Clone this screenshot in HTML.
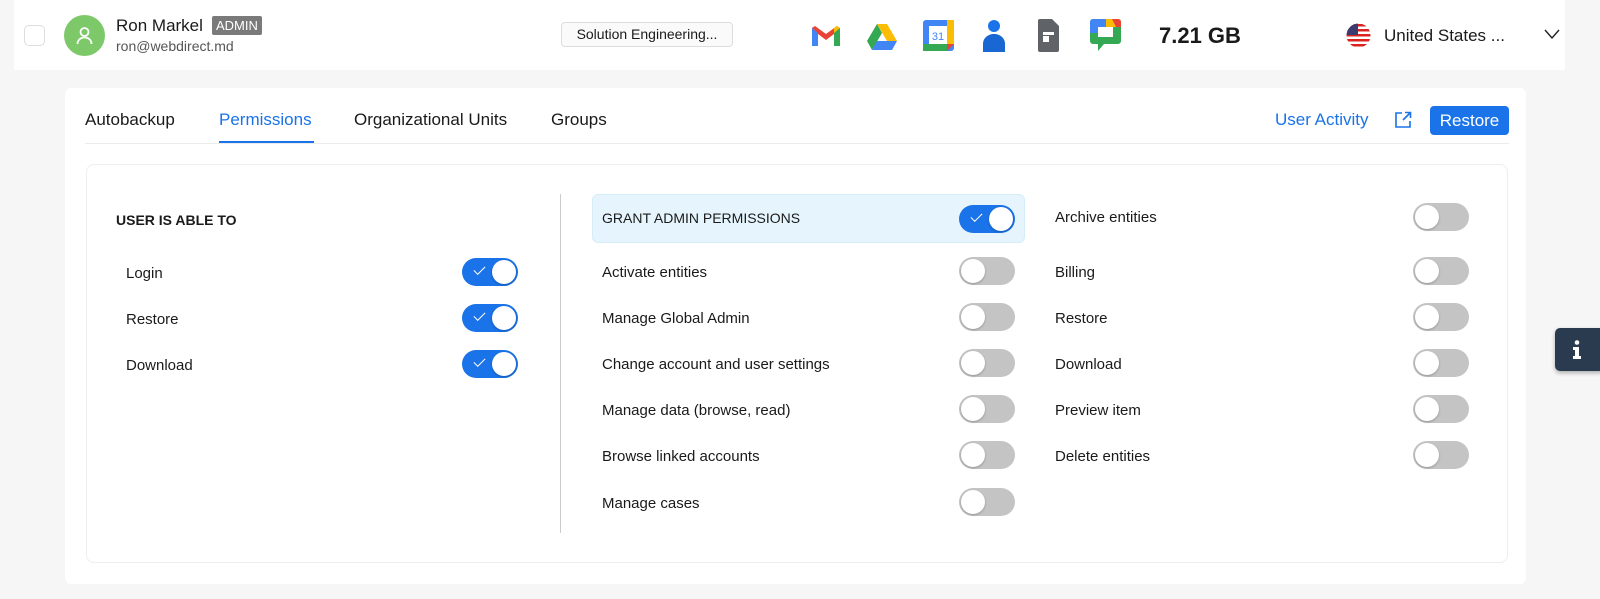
<!DOCTYPE html>
<html><head><meta charset="utf-8"><style>
*{box-sizing:border-box;margin:0;padding:0}
body{width:1600px;height:599px;background:#f6f6f6;font-family:"Liberation Sans",Arial,sans-serif;position:relative;overflow:hidden;color:#1a1a1a}
.a{position:absolute}
.top{left:14px;top:0;width:1551px;height:70px;background:#fff}
.tg{position:absolute;width:56px;height:28px;border-radius:14px;background:#c4c4c4}
.tg::after{content:"";position:absolute;left:2px;top:2px;width:24px;height:24px;border-radius:50%;background:#fff;box-shadow:0 1px 2px rgba(0,0,0,.25)}
.tg.on{background:#1a73e8}
.tg.on::after{left:30px}
.tg.on::before{content:"";position:absolute;left:12px;top:8px;width:10px;height:5px;border-left:1.5px solid #fff;border-bottom:1.5px solid #fff;transform:rotate(-45deg)}
.lb{position:absolute;font-size:15px;color:#1a1a1a}
.tab{position:absolute;top:110px;font-size:17px;color:#1a1a1a}
</style></head><body>
<div class="a top"></div>
<div class="a" style="left:24px;top:25px;width:21px;height:21px;border:1px solid #ddd;border-radius:5px;background:#fff"></div>
<div class="a" style="left:64px;top:15px;width:41px;height:41px;border-radius:50%;background:#7dc96a"></div>
<svg class="a" style="left:74px;top:25px" width="21" height="21" viewBox="0 0 21 21" fill="none" stroke="#fff" stroke-width="1.8"><circle cx="10.5" cy="7" r="4"/><path d="M3.5 19c0-4 3-6.5 7-6.5s7 2.5 7 6.5"/></svg>
<div class="a" style="left:116px;top:16px;font-size:17px">Ron Markel</div>
<div class="a" style="left:212px;top:16px;background:#7a7a7a;color:#fff;font-size:13px;padding:2px 4px;border-radius:2px">ADMIN</div>
<div class="a" style="left:116px;top:38px;font-size:14px;color:#555">ron@webdirect.md</div>
<div class="a" style="left:561px;top:22px;width:172px;height:25px;border:1px solid #ddd;border-radius:4px;background:#fafafa;font-size:14px;line-height:23px;text-align:center">Solution Engineering...</div>
<!-- gmail -->
<svg class="a" style="left:810px;top:24px" width="32" height="24" viewBox="0 0 32 24"><path d="M2 4v18h6V10l8 6 8-6v12h6V4l-3-2-11 8L5 2z" fill="#ea4335"/><path d="M2 4v18h6V9z" fill="#4285f4"/><path d="M24 9v13h6V4z" fill="#34a853"/><path d="M24 9l6-5-3-2-3 2z" fill="#fbbc04"/></svg>
<!-- drive -->
<svg class="a" style="left:866px;top:23px" width="32" height="28" viewBox="0 0 32 28"><path d="M11 1h10l10 17h-10z" fill="#fbbc04"/><path d="M11 1L1 18l5 9 10-17z" fill="#34a853"/><path d="M6 27h20l5-9H11z" fill="#4285f4"/></svg>
<!-- calendar -->
<svg class="a" style="left:923px;top:20px" width="31" height="31" viewBox="0 0 31 31"><rect x="0" y="0" width="31" height="31" rx="3" fill="#4285f4"/><rect x="0" y="24" width="24" height="7" fill="#34a853"/><rect x="24" y="0" width="7" height="24" fill="#fbbc04"/><path d="M24 24h7l-7 7z" fill="#ea4335"/><rect x="6" y="6" width="18" height="18" fill="#fff"/><text x="15" y="20" font-size="11" text-anchor="middle" fill="#4285f4" font-family="Liberation Sans">31</text></svg>
<!-- contacts -->
<svg class="a" style="left:982px;top:19px" width="24" height="33" viewBox="0 0 24 33"><circle cx="12" cy="7" r="6" fill="#1a73e8"/><path d="M1 33v-8c0-6 5-10 11-10s11 4 11 10v8z" fill="#1967d2"/></svg>
<!-- sites -->
<svg class="a" style="left:1038px;top:19px" width="21" height="33" viewBox="0 0 21 33"><path d="M2 0h12l7 7v24a2 2 0 0 1-2 2H2a2 2 0 0 1-2-2V2a2 2 0 0 1 2-2z" fill="#5f6368"/><rect x="5" y="13" width="11" height="3" fill="#fff"/><rect x="5" y="17" width="6" height="6" fill="#fff"/></svg>
<!-- chat -->
<svg class="a" style="left:1090px;top:19px" width="31" height="33" viewBox="0 0 31 33"><path d="M3 0h25a3 3 0 0 1 3 3v19a3 3 0 0 1-3 3H14l-6 7v-7H3a3 3 0 0 1-3-3V3a3 3 0 0 1 3-3z" fill="#34a853"/><path d="M0 3a3 3 0 0 1 3-3h13v8H8v6H0z" fill="#4285f4"/><path d="M16 0h12a3 3 0 0 1 3 3v5H16z" fill="#fbbc04"/><path d="M22 0h6a3 3 0 0 1 3 3v5h-5z" fill="#ea4335"/><rect x="8" y="8" width="15" height="10" fill="#fff"/></svg>
<div class="a" style="left:1159px;top:23px;font-size:22px;font-weight:bold">7.21 GB</div>
<svg class="a" style="left:1346px;top:23px" width="25" height="25" viewBox="0 0 25 25"><defs><clipPath id="c"><circle cx="12.5" cy="12.5" r="12"/></clipPath></defs><g clip-path="url(#c)"><rect width="25" height="25" fill="#fff"/><g fill="#d22"><rect y="1" width="25" height="2.5"/><rect y="6" width="25" height="2.5"/><rect y="11" width="25" height="2.5"/><rect y="16" width="25" height="2.5"/><rect y="21" width="25" height="2.5"/></g><rect width="12" height="12" fill="#3c3b6e"/></g></svg>
<div class="a" style="left:1384px;top:26px;font-size:17px">United States ...</div>
<svg class="a" style="left:1544px;top:29px" width="16" height="10" viewBox="0 0 16 10"><path d="M1 1l7 8 7-8" fill="none" stroke="#222" stroke-width="1.4"/></svg>

<div class="a" style="left:65px;top:88px;width:1461px;height:496px;background:#fff;border-radius:6px"></div>
<div class="tab" style="left:85px">Autobackup</div>
<div class="tab" style="left:219px;color:#1a73e8">Permissions</div>
<div class="tab" style="left:354px">Organizational Units</div>
<div class="tab" style="left:551px">Groups</div>
<div class="a" style="left:85px;top:143px;width:1424px;height:1px;background:#ececec"></div>
<div class="a" style="left:219px;top:141px;width:95px;height:2px;background:#1a73e8"></div>
<div class="a" style="left:1275px;top:110px;font-size:17px;color:#1a73e8">User Activity</div>
<svg class="a" style="left:1394px;top:111px" width="18" height="18" viewBox="0 0 18 18" fill="none" stroke="#1a73e8" stroke-width="1.6"><path d="M8 2H2v14h14v-6"/><path d="M11 1.5h5.5V7M16.5 1.5L9 9"/></svg>
<div class="a" style="left:1430px;top:106px;width:79px;height:29px;background:#1a73e8;border-radius:4px;color:#fff;font-size:17px;line-height:29px;text-align:center">Restore</div>

<div class="a" style="left:86px;top:164px;width:1422px;height:399px;border:1px solid #eee;border-radius:8px"></div>
<div class="a" style="left:116px;top:212px;font-size:14px;font-weight:bold">USER IS ABLE TO</div>
<div class="lb" style="left:126px;top:265px">Login</div><div class="tg on" style="left:462px;top:258px"></div>
<div class="lb" style="left:126px;top:311px">Restore</div><div class="tg on" style="left:462px;top:304px"></div>
<div class="lb" style="left:126px;top:357px">Download</div><div class="tg on" style="left:462px;top:350px"></div>
<div class="a" style="left:560px;top:194px;width:1px;height:339px;background:#ccc"></div>

<div class="a" style="left:592px;top:194px;width:433px;height:49px;background:#e6f5fd;border:1px solid #d6ecf7;border-radius:6px"></div>
<div class="lb" style="left:602px;top:210px;font-size:14px">GRANT ADMIN PERMISSIONS</div><div class="tg on" style="left:959px;top:205px"></div>
<div class="lb" style="left:602px;top:264px">Activate entities</div><div class="tg" style="left:959px;top:257px"></div>
<div class="lb" style="left:602px;top:310px">Manage Global Admin</div><div class="tg" style="left:959px;top:303px"></div>
<div class="lb" style="left:602px;top:356px">Change account and user settings</div><div class="tg" style="left:959px;top:349px"></div>
<div class="lb" style="left:602px;top:402px">Manage data (browse, read)</div><div class="tg" style="left:959px;top:395px"></div>
<div class="lb" style="left:602px;top:448px">Browse linked accounts</div><div class="tg" style="left:959px;top:441px"></div>
<div class="lb" style="left:602px;top:495px">Manage cases</div><div class="tg" style="left:959px;top:488px"></div>

<div class="lb" style="left:1055px;top:209px">Archive entities</div><div class="tg" style="left:1413px;top:203px"></div>
<div class="lb" style="left:1055px;top:264px">Billing</div><div class="tg" style="left:1413px;top:257px"></div>
<div class="lb" style="left:1055px;top:310px">Restore</div><div class="tg" style="left:1413px;top:303px"></div>
<div class="lb" style="left:1055px;top:356px">Download</div><div class="tg" style="left:1413px;top:349px"></div>
<div class="lb" style="left:1055px;top:402px">Preview item</div><div class="tg" style="left:1413px;top:395px"></div>
<div class="lb" style="left:1055px;top:448px">Delete entities</div><div class="tg" style="left:1413px;top:441px"></div>

<div class="a" style="left:1555px;top:328px;width:50px;height:43px;background:#2a3b50;border-radius:5px;box-shadow:0 2px 4px rgba(0,0,0,.3)"></div>
<svg class="a" style="left:1571px;top:340px" width="12" height="20" viewBox="0 0 12 20" fill="#fff"><circle cx="6" cy="2.5" r="2.3"/><path d="M2 7h6v9h2v3H2v-3h2v-6H2z"/></svg>
</body></html>
